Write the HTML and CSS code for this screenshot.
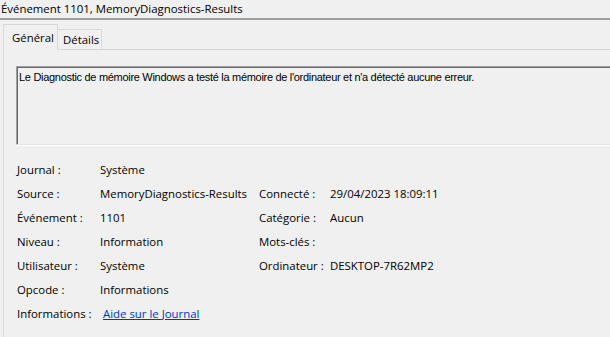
FILE: index.html
```html
<!DOCTYPE html>
<html>
<head>
    <title>Événement 1101</title>
    <link rel="stylesheet" href="styles.css">
</head>
<body>
    <div class="window">
        <div class="title">Événement 1101, MemoryDiagnostics-Results</div>
        <div class="separator"></div>

        <div class="tabs">
            <div class="tab active">Général</div>
            <div class="tab">Détails</div>
        </div>

        <div class="panel">
            <div class="description">Le Diagnostic de mémoire Windows a testé la mémoire de l'ordinateur et n'a détecté aucune erreur.</div>

            <div class="fields">
                <span class="label">Journal :</span>
                <span class="value">Système</span>
                <span></span>
                <span></span>

                <span class="label">Source :</span>
                <span class="value">MemoryDiagnostics-Results</span>
                <span class="label">Connecté :</span>
                <span class="value">29/04/2023 18:09:11</span>

                <span class="label">Événement :</span>
                <span class="value">1101</span>
                <span class="label">Catégorie :</span>
                <span class="value">Aucun</span>

                <span class="label">Niveau :</span>
                <span class="value">Information</span>
                <span class="label">Mots-clés :</span>
                <span class="value"></span>

                <span class="label">Utilisateur :</span>
                <span class="value">Système</span>
                <span class="label">Ordinateur :</span>
                <span class="value">DESKTOP-7R62MP2</span>

                <span class="label">Opcode :</span>
                <span class="value">Informations</span>
                <span></span>
                <span></span>

                <span class="label">Informations :</span>
                <span class="value"><a href="#">Aide sur le Journal</a></span>
                <span></span>
                <span></span>
            </div>
        </div>
    </div>
</body>
</html>
```

FILE: styles.css
```css
html, body {
    margin: 0;
    height: 100%;
    overflow: hidden;
}
body {
    font-family: "Open Sans", "Noto Sans", sans-serif;
    font-size: 11.4px;
    color: #000;
    background-color: #f0f0f0;
}
.window {
    height: 100%;
    display: flex;
    flex-direction: column;
}
.title {
    height: 18px;
    line-height: 17px;
    padding-left: 1px;
    white-space: nowrap;
}
.separator {
    height: 2px;
    background-color: #a0a0a0;
}
.tabs {
    display: flex;
    align-items: flex-end;
    margin-top: 4px;
    padding-left: 3px;
    height: 25px;
}
.tab {
    height: 20px;
    line-height: 19px;
    width: 44px;
    padding-left: 5px;
    border: 1px solid #d9d9d9;
    border-bottom: none;
    border-left: none;
    box-sizing: border-box;
    background-color: #f0f0f0;
    white-space: nowrap;
}
.tab.active {
    height: 26px;
    line-height: 25px;
    width: 55px;
    padding-left: 8px;
    border-left: 1px solid #d9d9d9;
    margin-bottom: -1px;
    position: relative; /* covers the panel border under the open tab */
    z-index: 1;
}
.panel {
    flex: 1;
    margin-left: 3px;
    border-top: 1px solid #d9d9d9;
    border-left: 1px solid #d9d9d9;
    padding: 16px 0 0 12px;
    overflow: hidden;
}
.description {
    height: 79px;
    margin-right: -12px; /* box runs on past the window edge */
    padding: 4px 0 0 2px;
    box-sizing: border-box;
    font-family: "Liberation Sans", Arial, sans-serif;
    font-size: 11px;
    letter-spacing: -0.3px;
    border: 1px solid #a0a0a0;
    border-right-color: #e3e3e3;
    border-bottom-color: #e3e3e3;
    box-shadow: inset 1px 1px 0 #696969, 0 1px 0 #fff;
    white-space: nowrap;
}
.fields {
    display: grid;
    grid-template-columns: 84px 158px 72px auto;
    grid-auto-rows: 24px;
    align-items: center;
    margin-top: 12px;
    white-space: nowrap;
}
.fields .label {
    padding-left: 1px;
}
.fields a {
    color: #0033cc;
    text-decoration: underline;
    margin-left: 3px;
}
```
